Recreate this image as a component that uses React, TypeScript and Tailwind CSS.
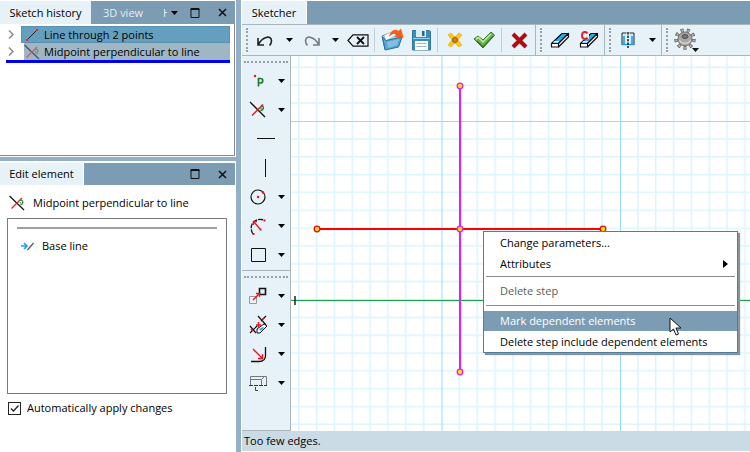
import type { ReactNode } from 'react'

interface ToolProps {
  label: string
  children: ReactNode
  className?: string
}

function Tool({ label, children, className = '' }: ToolProps) {
  return (
    <button type="button" aria-label={label} className={`flex shrink-0 items-center justify-center ${className}`}>
      {children}
    </button>
  )
}

function Caret() {
  return (
    <svg width="7" height="4" viewBox="0 0 7 4" className="shrink-0">
      <path d="M0 0h7L3.500 4z" fill="#000" />
    </svg>
  )
}

// dotted drag handle at the start of every toolbar
function Grip() {
  return <span className="ml-1 h-6 w-0 shrink-0 border-l-2 border-dotted border-[#9a9fa3]" />
}

function PanelButtons() {
  return (
    <div className="ml-auto flex items-center gap-4 pr-[7px]">
      <Tool label="Maximize" className="size-[10px]">
        <svg width="10" height="10" viewBox="0 0 10 10" fill="none" stroke="#111">
          <path d="M1 9.500V.5h8v9zM.5 1.500h9" />
        </svg>
      </Tool>
      <Tool label="Close" className="size-3">
        <svg width="9" height="9" viewBox="0 0 9 9" stroke="#111" strokeWidth="1.500">
          <path d="M1 1l7 7M8 1L1 8" />
        </svg>
      </Tool>
    </div>
  )
}

function MidpointIcon({ faded }: { faded?: boolean }) {
  return (
    <svg width="16" height="16" viewBox="0 0 16 16" fill="none" className={faded ? 'shrink-0 opacity-60' : 'shrink-0'}>
      <path d="M.5 1l14.500 14" stroke="#111" strokeWidth="1.200" />
      <path d="M2.500 13.500L13 3" stroke="#e8202a" strokeWidth="1.200" />
      <path d="M10.500 5.500c4-1.500 4.500 3 1 4.500" stroke="#2a8a3a" strokeWidth="1.200" />
      <circle cx="11.300" cy="7.800" r=".8" fill="#2a8a3a" />
    </svg>
  )
}

function Chevron() {
  return (
    <svg width="15" height="9" viewBox="0 0 15 9" fill="none" className="shrink-0">
      <path d="M3 .5l4 4-4 4" stroke="#8b8b8b" strokeWidth="1.500" />
    </svg>
  )
}

function HistoryPanel() {
  return (
    <section className="flex h-[157px] flex-col border-r border-b border-white bg-white">
      <div className="flex h-6 shrink-0 items-stretch border-t border-white bg-[#7b9cb3] whitespace-nowrap">
        <button type="button" className="w-[91px] shrink-0 bg-[#e6f2f8] text-center">Sketch history</button>
        <button type="button" className="ml-3 shrink-0 text-[#e3edf3]">3D view</button>
        <span className="ml-5 flex shrink-0 items-center text-[#e3edf3]">
          <span className="w-1 overflow-hidden">H</span>
          <button type="button" aria-label="More tabs" className="ml-1"><Caret /></button>
        </span>
        <PanelButtons />
      </div>
      <div className="flex-1 border-r border-b border-[#8a8a90] pt-[2px]">
        <ul className="mr-[4px] ml-[6px] border-b-3 border-[#0000f0]">
          <li className="flex h-[17px] items-center">
            <Chevron />
            <span className="flex h-full flex-1 items-center gap-[6px] border border-[#5b91b0] bg-[#659fc0] pl-1">
              <svg width="12" height="12" viewBox="0 0 12 12" className="shrink-0">
                <path d="M1 11L11 1" stroke="#222" />
                <path d="M0 10h2v2H0zM10 0h2v2h-2z" fill="#e8202a" />
              </svg>
              Line through 2 points
            </span>
          </li>
          <li className="flex h-[17px] items-center">
            <Chevron />
            <span className="ml-[3px] flex h-full flex-1 items-center gap-1 bg-[#9fb7c4]">
              <MidpointIcon faded />
              Midpoint perpendicular to line
            </span>
          </li>
        </ul>
      </div>
    </section>
  )
}

function EditPanel() {
  return (
    <section className="flex min-h-0 flex-1 flex-col border-t-2 border-r border-white bg-white">
      <div className="flex h-[22px] shrink-0 items-stretch bg-[#7b9cb3]">
        <button type="button" className="w-[84px] border-r border-white bg-[#e6f2f8] text-center">Edit element</button>
        <PanelButtons />
      </div>
      <h2 className="mt-[10px] ml-[9px] flex h-4 items-center gap-2">
        <MidpointIcon />
        Midpoint perpendicular to line
      </h2>
      <div className="mt-[7px] mr-2 ml-[7px] min-h-0 flex-1 border border-[#767b85] px-[9px] pt-2">
        <hr className="border-t-2 border-[#a0a0a0]" />
        <div className="mt-[9px] flex items-center gap-2 pl-1">
          <svg width="13" height="9" viewBox="0 0 13 9" fill="none">
            <path d="M0 4h6M3 1l3 3-3 3" stroke="#1ea0f0" strokeWidth="1.600" />
            <path d="M6.500 8L12.500 1" stroke="#555" strokeWidth="1.200" />
          </svg>
          Base line
        </div>
      </div>
      <label className="mt-[6px] mb-9 ml-2 flex h-4 items-center gap-[6px]">
        <span className="relative flex size-[13px]">
          <input type="checkbox" defaultChecked className="size-[13px] appearance-none border border-[#222] bg-white" />
          <svg viewBox="0 0 13 13" className="pointer-events-none absolute inset-0" fill="none" stroke="#222" strokeWidth="1.300">
            <path d="M3 6.500L5.500 9 10.500 3.500" />
          </svg>
        </span>
        Automatically apply changes
      </label>
    </section>
  )
}

function EraserIcon({ mark }: { mark?: boolean }) {
  return (
    <svg width="20" height="18" viewBox="0 0 20 18" stroke="#111" strokeWidth="1.200" strokeLinejoin="round">
      <path d="M1.500 12.500L12 2.500h6.500L8.500 12.500z" fill="#29a8ea" />
      <path d="M3 11.500l1.500-1.500h5l-1.500 1.500z" fill="#fff" stroke="none" />
      <path d="M1.500 12.500h7v3.500h-7zM8.500 12.500l10-10V6l-10 10z" fill="#fff" />
      {mark && (
        <>
          <path d="M0 0h10v8H0z" fill="#e6f2f8" stroke="none" />
          <path d="M8.500 2.500C7.500.3 3 .3 3 4.500s4.500 4.200 5.500 2" fill="none" stroke="#e8202a" strokeWidth="2" />
        </>
      )}
    </svg>
  )
}

function TopToolbar() {
  return (
    <div className="flex h-8 shrink-0 items-center border-y border-[#a9b6be] bg-[#e6f2f8]">
      <Grip />
      <Tool label="Undo" className="ml-[7px] w-5">
        <svg width="16" height="13" viewBox="0 0 16 13" fill="none" stroke="#222" strokeWidth="1.600">
          <path d="M1 4v7h6M1.500 10.500C5 3 14 .5 14.500 6.500c0 2-.5 3.500-2 5" />
        </svg>
      </Tool>
      <Tool label="Undo steps" className="ml-1 w-5"><Caret /></Tool>
      <Tool label="Redo" className="ml-[3px] w-5">
        <svg width="16" height="13" viewBox="0 0 16 13" fill="none" stroke="#757b80" strokeWidth="1.600">
          <path d="M15 4v7H9M14.500 10.500C11 3 2 .5 1.500 6.500c0 2 .5 3.500 2 5" />
        </svg>
      </Tool>
      <Tool label="Redo steps" className="ml-[3px] w-5"><Caret /></Tool>
      <Tool label="Delete last" className="ml-px w-6">
        <svg width="22" height="13" viewBox="0 0 22 13" fill="none" stroke="#111">
          <path d="M1 6.500L6 .8h15v11.400H6z" strokeWidth="1.200" />
          <path d="M10 3l7 7M17 3l-7 7" strokeWidth="1.800" />
        </svg>
      </Tool>
      <span className="ml-1 h-6 border-l border-[#c3ced4]" />
      <Tool label="Open" className="ml-[5px] w-6">
        <svg width="24" height="24" viewBox="0 0 24 24">
          <path d="M2 8l5-2 2 2 9-2v5L5 21z" fill="#a8d3ea" stroke="#3d7ea6" />
          <path d="M4 7l8-3 4 3-10 6z" fill="#fff" stroke="#8ab" strokeWidth=".6" />
          <path d="M2.500 9L6 12.500 22 9l-3.500 10L5 22z" fill="#5aa5d2" stroke="#2b6c96" />
          <path d="M7 14l12-3-2 6-9 3z" fill="#7fc0e4" />
          <path d="M9 9C10 3 15 0 18.500 3L21 .5l2.500 9-9-.5 2.500-2.500c-3-1.500-5-.5-8 2.500z" fill="#ff5a12" />
        </svg>
      </Tool>
      <Tool label="Save" className="ml-[7px] w-5">
        <svg width="19" height="22" viewBox="0 0 19 22">
          <path d="M.5 1.500h17l1 1v18.500H.5z" fill="#3d8db8" stroke="#2f769e" />
          <path d="M4 1h10v7H4z" fill="#d9edf7" />
          <path d="M10 2h2.500v5H10z" fill="#24658b" />
          <path d="M3 12h13v9H3z" fill="#fff" />
          <path d="M4.500 14.500h10M4.500 17.500h10" stroke="#9ab5c4" />
          <path d="M1 9.500h17" stroke="#8fd0ee" />
        </svg>
      </Tool>
      <span className="ml-[6px] h-6 border-l border-[#c3ced4]" />
      <Tool label="New point" className="ml-[9px] w-4">
        <svg width="16" height="16" viewBox="0 0 16 16">
          <path d="M1 3l3-2 4 4 4-4 3 2-4 5 4 5-3 2-4-4-4 4-3-2 4-5z" fill="#f7c71c" stroke="#e2a90f" strokeWidth=".6" />
          <circle cx="8" cy="8" r="2.500" fill="#d9820c" stroke="#8f5a0e" />
        </svg>
      </Tool>
      <Tool label="Apply" className="ml-[9px] w-6">
        <svg width="22" height="18" viewBox="0 0 22 18">
          <path d="M1 8l4-3 5 4L18 1l3.500 3L10 17z" fill="#6db544" stroke="#37772b" />
          <path d="M3 8l2.500-1.500L10 11l8-8" fill="none" stroke="#c4e8a8" strokeWidth="1.500" />
          <path d="M4 10l6 6L20.500 5" fill="none" stroke="#2f7a2c" strokeWidth="1.200" />
        </svg>
      </Tool>
      <span className="ml-[5px] h-6 border-l border-[#c3ced4]" />
      <Tool label="Cancel" className="ml-[7px] w-5">
        <svg width="17" height="17" viewBox="0 0 17 17">
          <path d="M2 2l13 13M15 2L2 15" stroke="#b00d10" strokeWidth="4" />
        </svg>
      </Tool>
      <span className="ml-[6px] h-full border-l border-[#a9b6be]" />
      <Grip />
      <Tool label="Erase" className="ml-2 w-5"><EraserIcon /></Tool>
      <Tool label="Erase construction" className="ml-[9px] w-5"><EraserIcon mark /></Tool>
      <span className="ml-[5px] h-full border-l border-[#a9b6be]" />
      <Grip />
      <Tool label="Mirror" className="ml-[9px] w-4">
        <svg width="14" height="16" viewBox="0 0 14 16" fill="none">
          <path d="M5 1.500L1 3v10l4-1.500zM9 1.500L13 3v10L9 11.500z" fill="#c9ebfb" />
          <path d="M5.500 1H1v12M8.500 1H13v12" stroke="#222" />
          <path d="M3 4v8M11 4v8M1 12.500h12" stroke="#1b9be0" strokeWidth="1.500" />
          <path d="M7 0v16" stroke="#111" strokeWidth="1.400" strokeDasharray="2.500 1" />
        </svg>
      </Tool>
      <Tool label="Mirror options" className="ml-[10px] w-3"><Caret /></Tool>
      <span className="ml-[3px] h-full border-l border-[#a9b6be]" />
      <Grip />
      <Tool label="Settings" className="ml-[7px] w-6">
        <svg width="26" height="24" viewBox="0 0 26 24" className="shrink-0">
          <circle cx="11" cy="11" r="8.800" fill="none" stroke="#5d5956" strokeWidth="3.800" strokeDasharray="3 3.140" />
          <circle cx="11" cy="11" r="8.800" fill="none" stroke="#b9b5b1" strokeWidth="2.200" strokeDasharray="1.800 4.340" strokeDashoffset="-.6" />
          <circle cx="11" cy="11" r="7" fill="#aaa6a2" stroke="#77726e" />
          <path d="M5.500 12c1 4 9.500 4.500 11 0" fill="none" stroke="#d2cfcc" strokeWidth="1.500" />
          <ellipse cx="11" cy="8.500" rx="3" ry="2" fill="#6c7884" stroke="#4e565d" />
          <path d="M18 20h7l-3.500 4z" fill="#111" />
        </svg>
      </Tool>
    </div>
  )
}

const SIDE_TOOLS: { label: string; menu: boolean; icon: ReactNode }[] = [
  {
    label: 'Point',
    menu: true,
    icon: (
      <>
        <circle cx="6" cy="4" r="1.200" fill="#f01020" />
        <path d="M9.500 14.500V6.500h2c3 0 3 4.500 0 4.500h-2" stroke="#1d7a2b" strokeWidth="1.700" />
      </>
    ),
  },
  {
    label: 'Perpendicular',
    menu: true,
    icon: (
      <>
        <path d="M1 1l15 15" stroke="#111" strokeWidth="1.300" />
        <path d="M3 14.500L14 3.500" stroke="#f01020" strokeWidth="1.500" />
        <path d="M12 4.500c3.500 0 3 4.500-.5 5" stroke="#1d7a2b" strokeWidth="1.300" />
        <circle cx="12" cy="7.200" r=".8" fill="#1d7a2b" />
      </>
    ),
  },
  { label: 'Horizontal line', menu: false, icon: <path d="M8 8.500h18" stroke="#111" /> },
  { label: 'Vertical line', menu: false, icon: <path d="M16.500 0v18" stroke="#111" /> },
  {
    label: 'Circle',
    menu: true,
    icon: (
      <>
        <circle cx="9" cy="9" r="7" stroke="#111" strokeWidth="1.200" />
        <circle cx="9" cy="9" r="1.200" fill="#f01020" />
        <circle cx="14" cy="4.500" r="1.200" fill="#f01020" />
      </>
    ),
  },
  {
    label: 'Arc',
    menu: true,
    icon: (
      <>
        <path d="M4 17C-1 9 5 0 15 3" stroke="#111" strokeWidth="1.300" strokeDasharray="5 1" />
        <path d="M11 12L5 5M4.500 8V4.500H8" stroke="#f01020" strokeWidth="1.300" />
        <path d="M3.500 16h2v2h-2zM14.500 2.500h2v2h-2zM10.500 11.500h2v2h-2z" fill="#f01020" />
      </>
    ),
  },
  { label: 'Rectangle', menu: true, icon: <path d="M2.500 2.500h14v13h-14z" stroke="#111" /> },
]

const EDIT_TOOLS: { label: string; icon: ReactNode }[] = [
  {
    label: 'Move',
    icon: (
      <>
        <path d="M.5 9.500h7v7h-7z" stroke="#999" />
        <path d="M10.500 1.500h6v6h-6z" stroke="#111" strokeWidth="1.600" />
        <path d="M4 13l6-6M7 6.500h3.500V10" stroke="#f01020" strokeWidth="1.300" />
      </>
    ),
  },
  {
    label: 'Trim',
    icon: (
      <>
        <path d="M9 0l8 9M17 0l-5 5M1 17l7-7M1 10l6 7" stroke="#111" strokeWidth="1.200" />
        <path d="M8 13l7-5 3 2-7 7H8z" fill="#fff" stroke="#111" />
        <path d="M10 13l4-2 1 1-3 3z" fill="#29a8ea" />
        <path d="M7 9h5M9.500 6v6M2 13l2 2M13 4l2-2" stroke="#f01020" strokeWidth="1.500" />
      </>
    ),
  },
  {
    label: 'Fillet',
    icon: (
      <>
        <path d="M2 16.500h8c5 0 6.500-2 6.500-6V2" stroke="#111" strokeWidth="1.300" />
        <path d="M4 4l9 9M13.500 9v4.500H9" stroke="#f01020" strokeWidth="1.300" />
      </>
    ),
  },
  {
    label: 'Offset',
    icon: (
      <>
        <path d="M1.500 11V2.500h16V11M1.500 5.500h11l3-3M12.500 5.500V11" stroke="#777" />
        <path d="M0 11.500h18" stroke="#333" strokeDasharray="4 1" />
        <path d="M6.500 13v3.500H9" stroke="#444" />
      </>
    ),
  },
]

function SideTool({ label, menu, children }: { label: string; menu: boolean; children: ReactNode }) {
  return (
    <div className="flex h-[29px] items-center justify-between pr-[5px] pl-[7px]">
      <Tool label={label}>
        <svg width="18" height="18" viewBox="0 0 18 18" fill="none" className="overflow-visible">{children}</svg>
      </Tool>
      {menu && <Tool label={`${label} options`}><Caret /></Tool>}
    </div>
  )
}

function SideToolbar() {
  return (
    <div className="flex w-[49px] shrink-0 flex-col border-r border-b border-[#a9b6be] bg-[#e6f2f8]">
      <div className="shrink-0 border-b border-[#a9b6be] pt-[5px] pb-px">
        <div className="mx-[2px] border-t-2 border-dotted border-[#9a9fa3]" />
        <div className="mt-[3px]">
          {SIDE_TOOLS.map((t) => (
            <SideTool key={t.label} label={t.label} menu={t.menu}>{t.icon}</SideTool>
          ))}
        </div>
      </div>
      <div className="pt-[5px]">
        <div className="mx-[2px] border-t-2 border-dotted border-[#9a9fa3]" />
        <div className="mt-[3px]">
          {EDIT_TOOLS.map((t) => (
            <SideTool key={t.label} label={t.label} menu>{t.icon}</SideTool>
          ))}
        </div>
      </div>
    </div>
  )
}

const STEP = 17.85
const MINOR = Array.from({ length: 9 }, (_, i) => (i + 1) * STEP)

function Drawing() {
  return (
    <svg className="absolute inset-0 size-full">
      <defs>
        <pattern id="grid" x="150.5" y="65" width="178.5" height="178.5" patternUnits="userSpaceOnUse">
          {MINOR.map((p) => (
            <path key={p} d={`M${p} 0v178.500M0 ${p}h178.500`} stroke="#dcf4fd" strokeWidth="1.500" />
          ))}
          <path d="M.5 0v178.500M0 .5h178.500" stroke="#97dcf6" />
        </pattern>
      </defs>
      <rect width="100%" height="100%" fill="url(#grid)" />
      <line x1="0" y1="244.5" x2="100%" y2="244.5" stroke="#12a84a" />
      <path d="M4 240v9" stroke="#222" strokeWidth="1.500" />
      <path d="M26 173h286" stroke="#f00" strokeWidth="2" />
      <path d="M169 30v286" stroke="#f01ae8" strokeWidth="2" />
      <g fill="#f2e600" strokeWidth="1.300">
        <g stroke="#e01010">
          <circle cx="26" cy="173" r="2.800" />
          <circle cx="312" cy="173" r="2.800" />
        </g>
        <g stroke="#f01ae8">
          <circle cx="169" cy="30" r="2.800" />
          <circle cx="169" cy="173" r="2.800" />
          <circle cx="169" cy="316" r="2.800" />
        </g>
      </g>
    </svg>
  )
}

function ContextMenu() {
  return (
    <div role="menu" className="absolute top-[175px] left-[192px] w-[255px] border border-[#4d7f9e] bg-white whitespace-nowrap shadow-[2px_2px_1px_#8a949b]">
      <button type="button" role="menuitem" className="flex h-[21px] w-full items-center px-4">Change parameters...</button>
      <button type="button" role="menuitem" className="flex h-[21px] w-full items-center justify-between pr-[9px] pl-4">
        Attributes
        <svg width="5" height="8" viewBox="0 0 5 8"><path d="M0 0l5 4-5 4z" fill="#000" /></svg>
      </button>
      <hr className="mx-[2px] mt-[2px] border-[#8c8c8c]" />
      <button type="button" role="menuitem" disabled className="flex h-7 w-full items-center px-4 text-[#5c5c5c]">Delete step</button>
      <hr className="mx-[2px] mb-[5px] border-[#8c8c8c]" />
      <button type="button" role="menuitem" className="flex h-5 w-full items-center bg-[#7b9cb3] px-4 text-white">Mark dependent elements</button>
      <button type="button" role="menuitem" className="flex h-[21px] w-full items-center px-4">Delete step include dependent elements</button>
    </div>
  )
}

function Cursor() {
  return (
    <svg width="13" height="19" viewBox="0 0 13 19" className="pointer-events-none absolute top-[261px] left-[378px]">
      <path d="M1 1v14l3.500-3 2.500 6 2.500-1-2.500-6H12z" fill="#fff" stroke="#111" />
    </svg>
  )
}

export default function App() {
  return (
    <div className="flex h-screen overflow-hidden bg-[#94b0c9] font-['Open_Sans','Noto_Sans',sans-serif] text-[11px] leading-4 text-black">
      <aside className="flex w-[236px] shrink-0 flex-col gap-1">
        <HistoryPanel />
        <EditPanel />
      </aside>
      <main className="ml-[5px] flex min-w-0 flex-1 flex-col border-l border-white">
        <div className="flex h-6 shrink-0 items-stretch border-t border-white bg-[#7b9cb3]">
          <button type="button" className="w-[65px] border-r border-white bg-[#e6f2f8] text-center">Sketcher</button>
        </div>
        <TopToolbar />
        <div className="flex min-h-0 flex-1">
          <SideToolbar />
          <div className="relative min-w-0 flex-1 overflow-hidden bg-white">
            <Drawing />
            <ContextMenu />
            <Cursor />
          </div>
        </div>
        <footer className="flex h-[21px] shrink-0 items-center border-b border-white bg-[#cbdbe5] px-[2px]">Too few edges.</footer>
      </main>
    </div>
  )
}
